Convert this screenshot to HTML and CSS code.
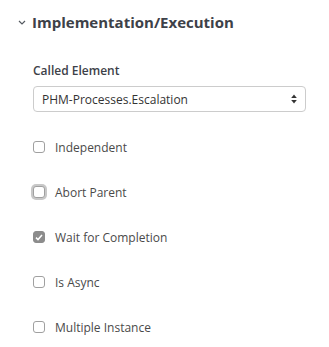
FILE: index.html
```html
<!DOCTYPE html>
<html>
<head>
  <meta charset="UTF-8">
  <title>Implementation/Execution</title>
  <link rel="stylesheet" href="styles.css">
</head>
<body>
  <div class="panel">
    <div class="panel-header">
      <svg class="chevron" width="8" height="5" viewBox="0 0 8 5">
        <path d="M1 1 L4 4 L7 1" fill="none" stroke="#555a61" stroke-width="1.2"/>
      </svg>
      <h2>Implementation/Execution</h2>
    </div>

    <div class="panel-body">
      <label class="field-label">Called Element</label>
      <div class="select">
        <span>PHM-Processes.Escalation</span>
        <svg width="6" height="10" viewBox="0 0 6 10">
          <path d="M3 0.5 L5.8 4 L0.2 4 Z" fill="#333"/>
          <path d="M3 9.5 L5.8 6 L0.2 6 Z" fill="#333"/>
        </svg>
      </div>

      <div class="check-row">
        <span class="box"></span>
        <span class="check-label">Independent</span>
      </div>
      <div class="check-row">
        <span class="box focused"></span>
        <span class="check-label">Abort Parent</span>
      </div>
      <div class="check-row">
        <span class="box checked">
          <svg width="8" height="7" viewBox="0 0 8 7">
            <path d="M1 3.6 L3 5.6 L7 1" fill="none" stroke="#fff" stroke-width="1.5"/>
          </svg>
        </span>
        <span class="check-label">Wait for Completion</span>
      </div>
      <div class="check-row">
        <span class="box"></span>
        <span class="check-label">Is Async</span>
      </div>
      <div class="check-row">
        <span class="box"></span>
        <span class="check-label">Multiple Instance</span>
      </div>
    </div>
  </div>
</body>
</html>
```

FILE: styles.css
```css
body {
  margin: 0;
  background-color: #ffffff;
  font-family: 'Open Sans', sans-serif;
  color: #444444;
}

.panel {
  padding-top: 12px;
}

.panel-header {
  display: flex;
  align-items: center;
  height: 20px;
  padding-left: 18px;
}

.chevron {
  margin-right: 6px;
  margin-top: 1px;
}

.panel-header h2 {
  margin: 0;
  font-size: 15px;
  font-weight: 700;
  color: #3d4148;
  line-height: 20px;
}

.panel-body {
  padding-left: 33px;
  padding-right: 23px;
}

.field-label {
  display: block;
  margin-top: 31px;
  font-size: 12px;
  font-weight: 600;
  line-height: 16px;
  color: #3d4148;
}

.select {
  margin-top: 7px;
  height: 26px;
  box-sizing: border-box;
  border: 1px solid #cccccc;
  border-radius: 4px;
  display: flex;
  align-items: center;
  justify-content: space-between;
  padding: 0 8px 0 8px;
  font-size: 12px;
  color: #333333;
}

.check-row {
  display: flex;
  align-items: center;
  height: 20px;
  margin-top: 25px;
}

.box {
  width: 12px;
  height: 12px;
  box-sizing: border-box;
  border: 1px solid #a0a0a0;
  border-radius: 3px;
  margin-right: 10px;
  display: flex;
  align-items: center;
  justify-content: center;
  background-color: #ffffff;
}

.box.focused {
  box-shadow: 0 0 0 2px #c8c8c8;
}

.box.checked {
  background-color: #8c8c8c;
  border-color: #8c8c8c;
}

.check-label {
  font-size: 12px;
  color: #4a4a4a;
}
```
